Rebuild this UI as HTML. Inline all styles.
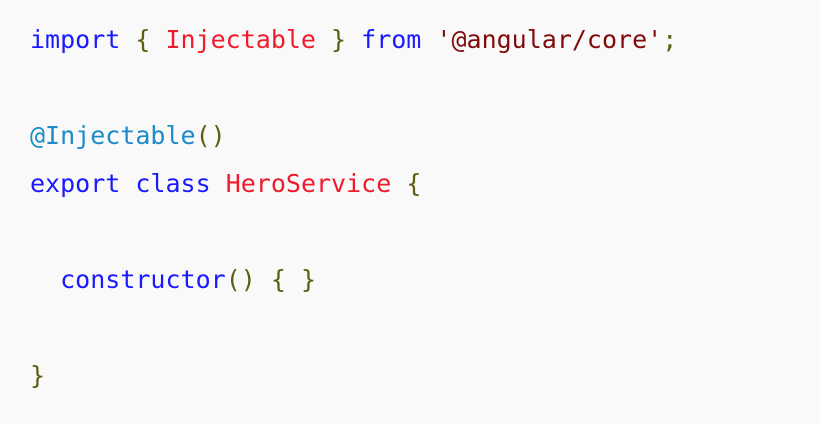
<!DOCTYPE html>
<html><head><style>
html,body{margin:0;padding:0;background:#f9f9f9;width:820px;height:424px;overflow:hidden}
pre{margin:0;padding:16px 0 0 30px;font-family:"DejaVu Sans Mono","Liberation Mono",monospace;font-size:25px;line-height:48px;color:#5e5e10}
.k{color:#1a1aff}.n{color:#f01c2c}.s{color:#7f0b0b}.d{color:#1e8bc9}.p{color:#5e5e10}
</style></head><body><pre><span class="k">import</span> { <span class="n">Injectable</span> } <span class="k">from</span> <span class="s">'@angular/core'</span>;

<span class="d">@Injectable</span>()
<span class="k">export</span> <span class="k">class</span> <span class="n">HeroService</span> {

  <span class="k">constructor</span>() { }

}</pre></body></html>
